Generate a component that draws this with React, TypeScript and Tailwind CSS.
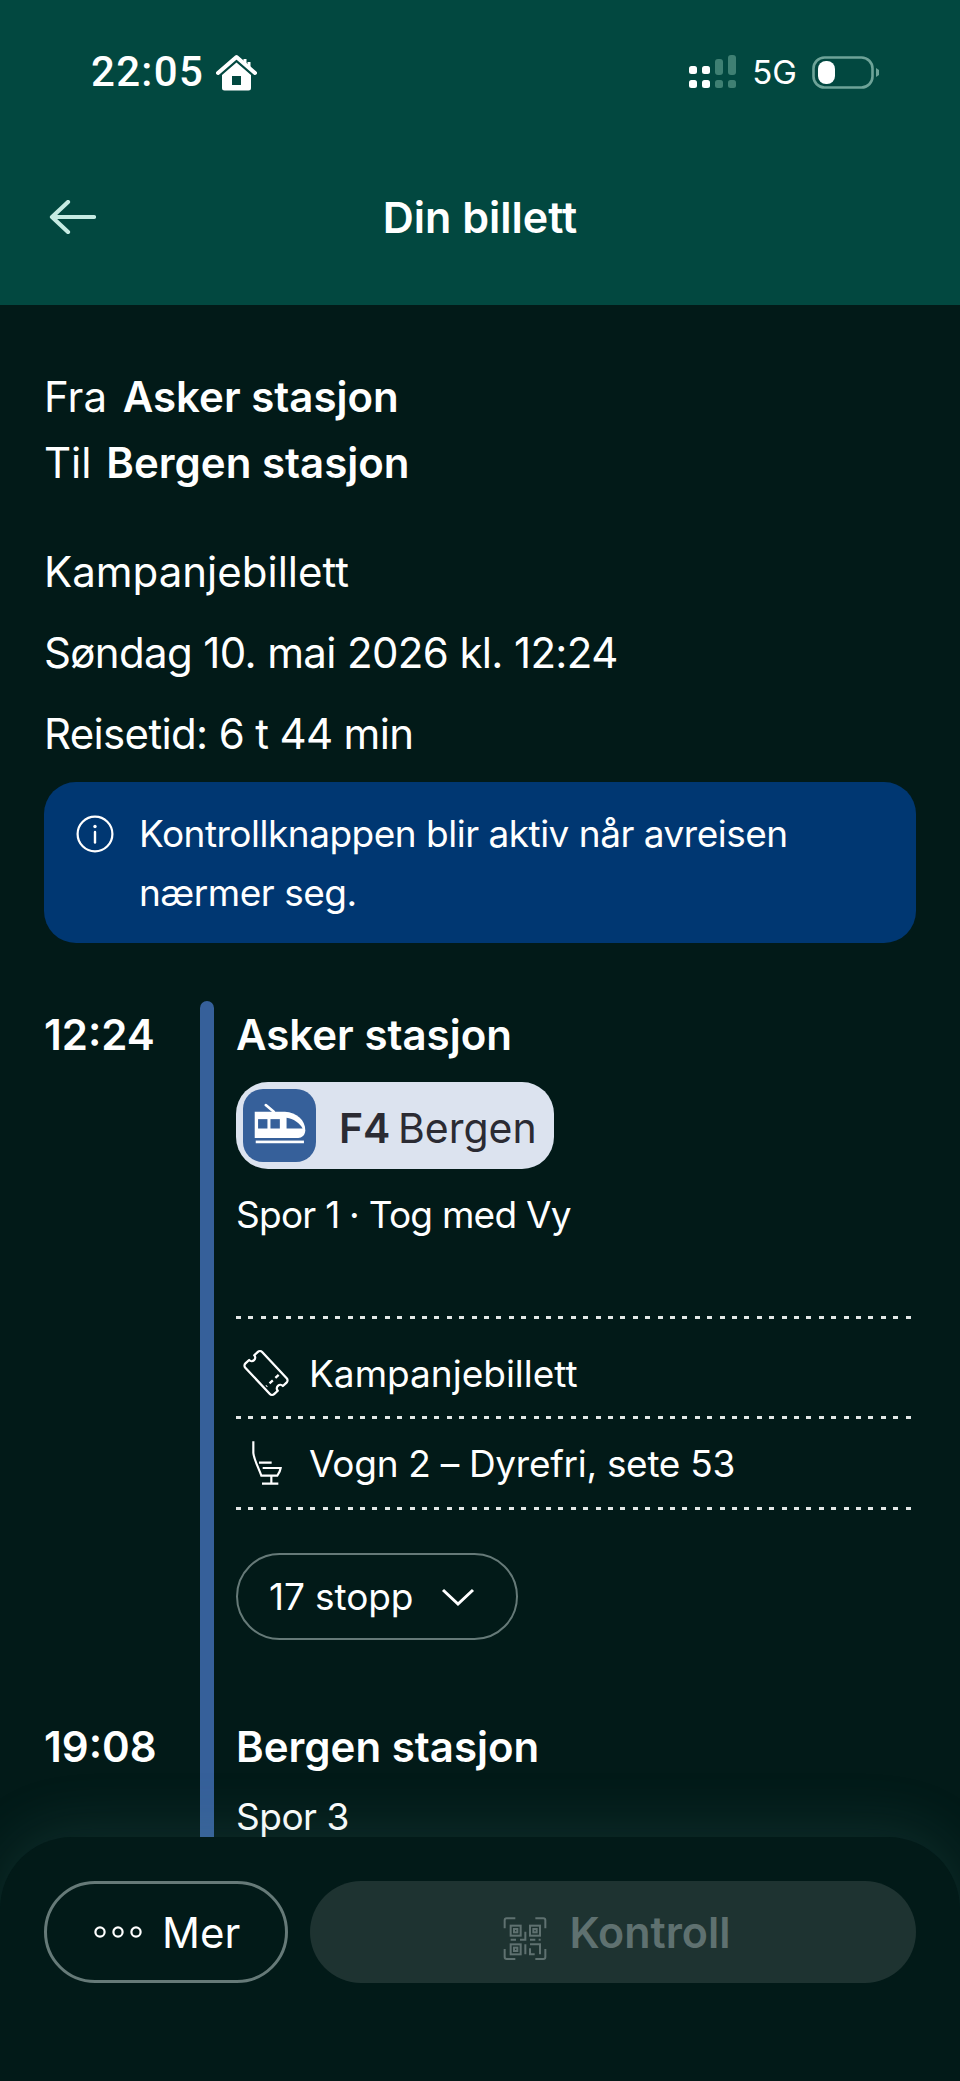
import React from "react";

const sans = "font-['Inter',sans-serif]";

function HomeGlyph() {
  return (
    <svg width="41" height="37" viewBox="0 0 41 37" fill="none" className="ml-[12px]">
      <path d="M2 19 L20.5 3 L39 19" stroke="#fff" strokeWidth="4" strokeLinecap="round" strokeLinejoin="round" />
      <path d="M29 5 V10 M33 8 V13" stroke="#fff" strokeWidth="3" />
      <path fillRule="evenodd" clipRule="evenodd" d="M6 21 L20.5 8.5 L35 21 V34 a2.5 2.5 0 0 1 -2.5 2.5 H8.5 a2.5 2.5 0 0 1 -2.5 -2.5 Z M16 22 V31 H25 V22 Z" fill="#fff" />
    </svg>
  );
}

function SignalGlyph() {
  return (
    <svg width="48" height="34" viewBox="0 0 48 34" className="mr-[16px]">
      <rect x="1" y="11" width="8" height="8" rx="2.5" fill="#fff" />
      <rect x="14" y="11" width="8" height="8" rx="2.5" fill="#fff" />
      <rect x="1" y="25" width="8" height="8" rx="2.5" fill="#fff" />
      <rect x="14" y="25" width="8" height="8" rx="2.5" fill="#fff" />
      <rect x="27" y="4" width="8" height="16" rx="3" fill="#3f8073" />
      <rect x="40" y="0" width="8" height="20" rx="3" fill="#3f8073" />
      <rect x="27" y="25" width="8" height="8" rx="2.5" fill="#3f8073" />
      <rect x="40" y="25" width="8" height="8" rx="2.5" fill="#3f8073" />
    </svg>
  );
}

function BatteryGlyph() {
  return (
    <svg width="68" height="33" viewBox="0 0 68 33" className="ml-[15px]">
      <rect x="1.5" y="1.5" width="59" height="30" rx="11" fill="none" stroke="#6ea398" strokeWidth="2.6" />
      <rect x="6" y="5" width="17" height="23" rx="8" fill="#fff" />
      <path d="M64 12 L67 14 V19 L64 21 Z" fill="#6ea398" />
    </svg>
  );
}

function BackArrow() {
  return (
    <svg width="47" height="34" viewBox="0 0 47 34" fill="none">
      <path d="M19 2 L3 17 L19 32 M3 17 H45" stroke="#c6ebe3" strokeWidth="4.2" strokeLinecap="round" strokeLinejoin="round" />
    </svg>
  );
}

function InfoGlyph() {
  return (
    <svg width="38" height="38" viewBox="0 0 38 38" fill="none">
      <circle cx="19" cy="19" r="17.4" stroke="#fff" strokeWidth="2.2" />
      <circle cx="19" cy="11.5" r="1.7" fill="#fff" />
      <path d="M19 17 V27.5" stroke="#fff" strokeWidth="2.4" strokeLinecap="round" />
    </svg>
  );
}

function TrainGlyph() {
  return (
    <svg width="73" height="73" viewBox="40 42 218 218">
      <path d="M108 90 L132 110" stroke="#fff" strokeWidth="8" strokeLinecap="round" />
      <path d="M75 110 H165 C200 112 226 135 226 165 C226 180 215 188 205 188 H75 Z" fill="#fff" />
      <rect x="85" y="132" width="28" height="28" fill="#36609a" />
      <rect x="122" y="132" width="28" height="28" fill="#36609a" />
      <path d="M170 128 C190 130 210 145 218 160 H170 Z" fill="#36609a" />
      <rect x="78" y="196" width="144" height="8" fill="#fff" />
    </svg>
  );
}

function TicketGlyph() {
  return (
    <svg width="50" height="52" viewBox="-25 -26 50 52" fill="none">
      <g transform="rotate(47)" stroke="#fff" strokeWidth="2.3" strokeLinejoin="round">
        <path d="M-18 -11.5 H18 a3 3 0 0 1 3 3 V-3.5 a3.5 3.5 0 0 0 0 7 V8.5 a3 3 0 0 1 -3 3 H-18 a3 3 0 0 1 -3 -3 V3.5 a3.5 3.5 0 0 0 0 -7 V-8.5 a3 3 0 0 1 3 -3 Z" />
        <path d="M10 -8 V9" strokeDasharray="4.5 3.5" />
      </g>
    </svg>
  );
}

function SeatGlyph() {
  return (
    <svg width="34" height="48" viewBox="55 298 102 144" fill="none" stroke="#fff" strokeWidth="6.5">
      <path d="M68 305 V340 C70 360 84 385 92 408 H140 C146 400 149 392 150 385 H96" />
      <path d="M85 369 H123 M122 408 V432 M94 432 H143" />
    </svg>
  );
}

function QrGlyph() {
  return (
    <svg width="70" height="70" viewBox="0 0 210 210" fill="none" stroke="#5f7170" strokeWidth="6">
      <path d="M76 64 H50 a6 6 0 0 0 -6 6 V94 M136 64 H160 a6 6 0 0 1 6 6 V94 M44 156 V180 a6 6 0 0 0 6 6 H76 M166 156 V180 a6 6 0 0 1 -6 6 H136" />
      <rect x="62" y="86" width="30" height="30" />
      <rect x="72" y="96" width="10" height="10" />
      <rect x="120" y="86" width="30" height="30" />
      <rect x="130" y="96" width="10" height="10" />
      <rect x="62" y="142" width="30" height="30" />
      <rect x="72" y="152" width="10" height="10" />
      <path d="M62 128 H78 M90 128 H106 V104 M120 128 H136 M146 128 H152 M106 142 V172 M120 142 H150 V172 M120 154 V172 H134" />
    </svg>
  );
}

function DotsGlyph() {
  return (
    <svg width="52" height="14" viewBox="0 0 52 14" fill="none" stroke="#fff" strokeWidth="2.2">
      <circle cx="8" cy="7" r="4.6" />
      <circle cx="26" cy="7" r="4.6" />
      <circle cx="44" cy="7" r="4.6" />
    </svg>
  );
}

function Divider() {
  return (
    <div className="h-[3px] w-[676px] bg-[repeating-linear-gradient(90deg,#e3e8e7_0,#e3e8e7_5px,transparent_5px,transparent_12.4px)]" />
  );
}

export default function App() {
  return (
    <div className={`relative h-[2081px] w-[960px] overflow-hidden bg-[#021a18] text-white ${sans}`}>
      <header className="flex h-[305px] flex-col bg-[#024840]">
        <div className="flex h-[144px] items-center justify-between pl-[91px] pr-[80px]">
          <div className="flex items-center font-['Roboto',sans-serif] text-[42px] font-medium leading-none tracking-[1.3px]">
            22:05
            <HomeGlyph />
          </div>
          <div className="flex items-center">
            <SignalGlyph />
            <span className="text-[33px] leading-none">5G</span>
            <BatteryGlyph />
          </div>
        </div>
        <div className="relative flex h-[146px] items-center justify-center">
          <div className="absolute left-[49px] top-[56px]">
            <BackArrow />
          </div>
          <h1 className="text-[43px] font-semibold leading-none">Din billett</h1>
        </div>
      </header>

      <main className="px-[44px] pt-[59px]">
        <div className="text-[42px] leading-[66px]">
          <p>
            Fra <span className="ml-[4px] font-semibold">Asker stasjon</span>
          </p>
          <p>
            Til <span className="ml-[3px] font-semibold">Bergen stasjon</span>
          </p>
        </div>
        <div className="mt-[35px] text-[42px] leading-[81px]">
          <p>Kampanjebillett</p>
          <p className="tracking-[-0.64px]">Søndag 10. mai 2026 kl. 12:24</p>
          <p className="tracking-[-0.66px]">Reisetid: 6 t 44 min</p>
        </div>

        <div className="mt-[8px] flex h-[161px] w-[872px] rounded-[32px] bg-[#003772] pl-[32px] pr-[60px] pt-[22px]">
          <div className="mt-[11px] shrink-0">
            <InfoGlyph />
          </div>
          <p className="ml-[25px] text-[37px] leading-[59px] tracking-[-0.5px]">Kontrollknappen blir aktiv når avreisen nærmer seg.</p>
        </div>

        <div className="mt-[58px] grid grid-cols-[156px_14px_1fr]">
          <div className="pt-[4px] text-[42px] font-semibold leading-[60px]">12:24</div>
          <div className="row-span-2 rounded-t-[7px] bg-[#36609a]" />
          <div className="ml-[22px] pt-[4px]">
            <h2 className="text-[42px] font-semibold leading-[60px]">Asker stasjon</h2>
            <div className="mt-[17px] flex h-[87px] w-[318px] items-center rounded-[32px] bg-[#dce3ef] pl-[7px] text-[#2b2b33]">
              <div className="flex h-[73px] w-[73px] items-center justify-center overflow-hidden rounded-[20px] bg-[#36609a]">
                <TrainGlyph />
              </div>
              <span className="ml-[23px] mt-[5px] text-[41px] leading-none [word-spacing:-4px]">
                <b className="font-semibold">F4</b> Bergen
              </span>
            </div>
            <p className="mt-[16px] text-[37px] leading-[60px] tracking-[-0.75px]">Spor 1 · Tog med Vy</p>
            <div className="mt-[71px]">
              <Divider />
              <div className="flex h-[97px] items-center">
                <div className="mt-[10px] flex w-[60px] justify-center">
                  <TicketGlyph />
                </div>
                <span className="ml-[13px] mt-[12px] text-[37px] leading-none">Kampanjebillett</span>
              </div>
              <Divider />
              <div className="flex h-[88px] items-center">
                <div className="flex w-[60px] justify-center">
                  <SeatGlyph />
                </div>
                <span className="ml-[13px] text-[37px] leading-none tracking-[-0.3px]">Vogn 2 – Dyrefri, sete 53</span>
              </div>
              <Divider />
            </div>
            <div className="mt-[43px] flex h-[87px] w-[282px] items-center rounded-full border-2 border-[#667a78] pl-[31px]">
              <span className="text-[37px] leading-none tracking-[-0.1px]">17 stopp</span>
              <svg width="34" height="20" viewBox="0 0 34 20" fill="none" className="ml-[28px]">
                <path d="M2 3 L17 17 L32 3" stroke="#fff" strokeWidth="3" />
              </svg>
            </div>
          </div>
          <div className="pt-[77px] text-[42px] font-semibold leading-[60px]">19:08</div>
          <div className="ml-[22px] pt-[77px]">
            <h2 className="text-[42px] font-semibold leading-[60px]">Bergen stasjon</h2>
            <p className="mt-[10px] text-[37px] leading-[60px] tracking-[-0.5px]">Spor 3</p>
          </div>
        </div>
      </main>

      <footer className="absolute inset-x-0 bottom-0 flex h-[244px] gap-[22px] rounded-t-[72px] bg-[#021a18] px-[44px] pt-[44px] shadow-[0_-8px_60px_rgba(90,150,140,0.16)]">
        <button className="flex h-[102px] w-[244px] items-center gap-[18px] rounded-full border-[3px] border-[#667a78] pl-[45px] text-[42px]">
          <DotsGlyph />
          Mer
        </button>
        <button className="flex h-[102px] flex-1 items-center justify-center gap-[9px] rounded-full bg-[#1e3331] pr-[5px] text-[43px] font-semibold text-[#5f7170]">
          <QrGlyph />
          Kontroll
        </button>
      </footer>
    </div>
  );
}
